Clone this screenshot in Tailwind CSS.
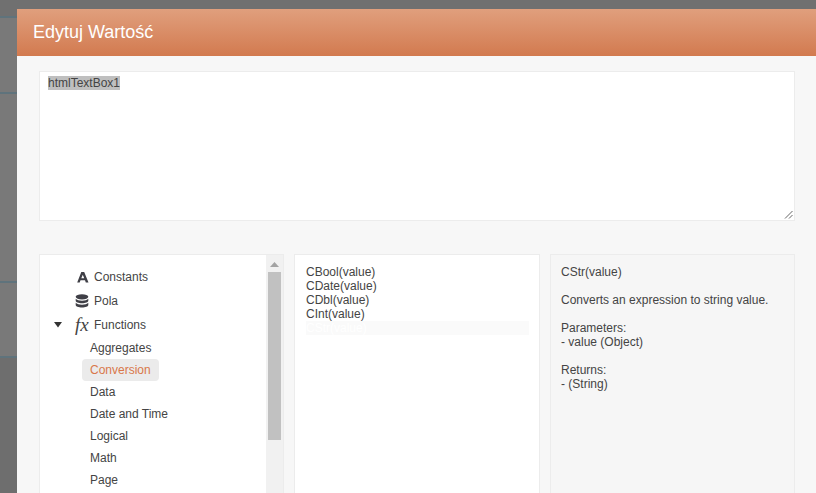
<!DOCTYPE html>
<html lang="pl">
<head>
    <meta charset="UTF-8">
    <title>Edytuj Wartość</title>
    <script src="https://cdn.jsdelivr.net/npm/@tailwindcss/browser@4"></script>
</head>
<body class="bg-[#797979] font-['Liberation_Sans',Arial,sans-serif] overflow-hidden">
    <div class="relative w-[816px] h-[493px] overflow-hidden">
        <!-- dimmed page behind the dialog -->
        <div class="w-[17px] h-full flex flex-col">
            <div class="h-[18px] bg-[#707070] border-b-2 border-[#5f737c]"></div>
            <div class="h-[76px] border-b-2 border-[#5f737c]"></div>
            <div class="h-[189px] border-b-2 border-[#5f737c]"></div>
            <div class="h-[75px] border-b-2 border-[#5f737c]"></div>
            <div class="flex-1 bg-[#6e6e6e]"></div>
        </div>
        <div class="absolute left-0 top-0 w-full h-[9px] bg-[#707070]"></div>

        <!-- dialog -->
        <div class="absolute left-[17px] top-[9px] w-[799px] h-[484px] bg-[#f7f7f7] flex flex-col">
            <div class="h-[47px] shrink-0 pl-[16px] flex items-center bg-gradient-to-b from-[#e09f7d] to-[#d27a4f] text-white text-[18px]">Edytuj Wartość</div>
            <div class="flex-1 pt-[15px] pl-[22px] pr-[21px]">
                <div class="relative h-[150px] bg-white border border-[#ececec] pl-[8px] pt-[4px] text-[12px] leading-[14px] text-[#444]">
                    <span class="bg-[#bfbfbf]">htmlTextBox1</span>
                    <svg class="absolute right-[1px] bottom-[1px]" width="9" height="9" viewBox="0 0 9 9" fill="none" stroke="#666" stroke-width="1">
                        <path d="M1 8.5 L8.5 1 M5 8.5 L8.5 5"/>
                    </svg>
                </div>
                <div class="mt-[33px] flex gap-[10px] h-[300px]">
                    <!-- tree -->
                    <div class="relative w-[245px] bg-white border border-[#ececec] text-[12px] text-[#444]">
                        <div class="flex items-center h-[24px] mt-[10px] pl-[37px]">
                            <svg class="w-[12px] h-[12px]" viewBox="0 0 12 12" fill="#3f3f46"><path d="M4.300 1h2.900L11.500 11.500H8.800L8 9.300H3.500L2.700 11.500H.2zM5.800 3.800 4.300 7.300h2.900z"/></svg>
                            <span class="ml-[5px]">Constants</span>
                        </div>
                        <div class="flex items-center h-[24px] pl-[35px]">
                            <svg class="w-[14px] h-[14px]" viewBox="0 0 14 14" fill="#3f3f46">
                                <ellipse cx="7" cy="2.800" rx="6.300" ry="2.600"/>
                                <path d="M.7 4.700v2c0 1.400 2.800 2.500 6.300 2.500s6.300-1.100 6.300-2.500v-2c-1 1.300-3.600 2-6.300 2S1.700 6 .7 4.700z"/>
                                <path d="M.7 8.800v2.200c0 1.400 2.800 2.500 6.300 2.500s6.300-1.100 6.300-2.500V8.800c-1 1.300-3.600 2-6.300 2s-5.300-.7-6.300-2z"/>
                            </svg>
                            <span class="ml-[5px]">Pola</span>
                        </div>
                        <div class="relative flex items-center h-[24px] pl-[35px]">
                            <svg class="absolute left-[14px] top-[9px] w-[9px] h-[6px]" viewBox="0 0 9 6" fill="#333"><path d="M0 0h8L4 5.500z"/></svg>
                            <span class="w-[15px] font-['Liberation_Serif',serif] italic text-[19px] leading-[24px] text-[#444]">fx</span>
                            <span class="ml-[4px]">Functions</span>
                        </div>
                        <div class="pl-[42px]">
                            <div class="h-[22px] pl-[8px] leading-[22px]">Aggregates</div>
                            <div class="h-[22px] w-[77px] pl-[8px] leading-[22px] rounded-[4px] bg-[#ebebeb] text-[#d9784a]">Conversion</div>
                            <div class="h-[22px] pl-[8px] leading-[22px]">Data</div>
                            <div class="h-[22px] pl-[8px] leading-[22px]">Date and Time</div>
                            <div class="h-[22px] pl-[8px] leading-[22px]">Logical</div>
                            <div class="h-[22px] pl-[8px] leading-[22px]">Math</div>
                            <div class="h-[22px] pl-[8px] leading-[22px]">Page</div>
                        </div>
                        <!-- scrollbar -->
                        <div class="absolute right-0 top-0 bottom-0 w-[17px] bg-[#f1f1f1] flex flex-col items-center">
                            <svg class="mt-[7px] w-[9px] h-[5px]" viewBox="0 0 9 5" fill="#a3a3a3"><path d="M4.500 0 9 5H0z"/></svg>
                            <div class="mt-[5px] w-[13px] h-[168px] bg-[#c1c1c1]"></div>
                        </div>
                    </div>
                    <!-- function list -->
                    <div class="w-[246px] bg-white border border-[#ececec] pt-[10px] pl-[11px] pr-[10px] text-[12px] leading-[14px] text-[#444]">
                        <div>CBool(value)</div>
                        <div>CDate(value)</div>
                        <div>CDbl(value)</div>
                        <div>CInt(value)</div>
                        <div class="bg-[#fafafa] text-white">CStr(value)</div>
                    </div>
                    <!-- description -->
                    <div class="w-[245px] bg-[#f6f6f6] border border-[#ececec] pt-[10px] px-[10px] text-[12px] leading-[14px] text-[#444]">
                        <div>CStr(value)</div>
                        <div class="mt-[14px]">Converts an expression to string value.</div>
                        <div class="mt-[14px]">Parameters:</div>
                        <div>- value (Object)</div>
                        <div class="mt-[14px]">Returns:</div>
                        <div>- (String)</div>
                    </div>
                </div>
            </div>
        </div>
    </div>
</body>
</html>
